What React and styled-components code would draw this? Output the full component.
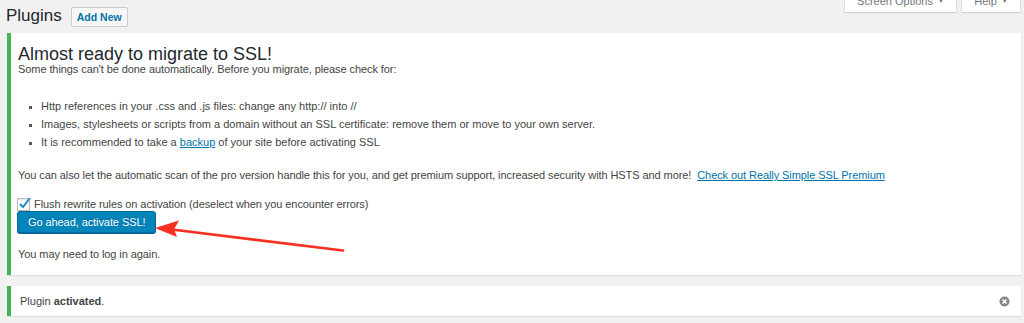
import styled, { createGlobalStyle } from "styled-components";

const GlobalStyle = createGlobalStyle`
  body {
    margin: 0;
    background: #f1f1f1;
    font-family: "Liberation Sans", Arial, sans-serif;
    color: #444;
  }
`;

const Page = styled.div`
  position: relative;
  width: 1024px;
  height: 323px;
  overflow: hidden;
`;

const Header = styled.div`
  display: flex;
  justify-content: space-between;
  align-items: flex-start;
  height: 33px;
`;

const TitleGroup = styled.div`
  display: flex;
  align-items: center;
  height: 33px;
  padding-left: 6px;
`;

const PageTitle = styled.h1`
  margin: 0 9px 2px 0;
  font-size: 17px;
  font-weight: 400;
  color: #23282d;
  line-height: 20px;
`;

const AddNew = styled.a`
  display: inline-flex;
  align-items: center;
  height: 18px;
  padding: 0 5px;
  border: 1px solid #ccc;
  border-radius: 2px;
  background: #f7f7f7;
  color: #0073aa;
  font-size: 10.5px;
  font-weight: 700;
  text-decoration: none;
`;

const Tabs = styled.div`
  display: flex;
  gap: 6px;
  margin-top: -11px;
  padding-right: 4px;
`;

const Tab = styled.div`
  display: flex;
  align-items: center;
  justify-content: center;
  gap: 5px;
  width: ${p => p.$w}px;
  height: 23px;
  background: #fff;
  box-shadow: 0 0 0 1px rgba(0, 0, 0, 0.06), 0 1px 1px rgba(0, 0, 0, 0.08);
  color: #72777c;
  font-size: 11px;
`;

const Caret = styled.span`
  font-size: 6px;
`;

const Notice = styled.div`
  margin: ${p => (p.$gap ? "11px" : "0")} 3px 0 7px;
  background: #fff;
  border-left: 4px solid #46b450;
  box-shadow: 0 1px 1px rgba(0, 0, 0, 0.08);
`;

const MigrateBody = styled.div`
  padding: 12px 12px 13px 7px;
  letter-spacing: -0.08px;
`;

const NoticeTitle = styled.h2`
  margin: 0 0 -2px;
  font-size: 18px;
  font-weight: 400;
  line-height: 19px;
  letter-spacing: 0;
  color: #23282d;
`;

const Text = styled.p`
  margin: ${p => p.$mt || 0}px 0 0;
  font-size: 11px;
  line-height: ${p => p.$lh || 16}px;
`;

const List = styled.ul`
  margin: 21px 0 15px;
  padding-left: 23px;
  list-style: square;
  font-size: 11px;
  line-height: 18px;
  letter-spacing: 0;

  li::marker {
    font-size: 9px;
    color: #555;
  }
`;

const Link = styled.a`
  color: #0073aa;
  text-decoration: underline;
`;

const CheckRow = styled.label`
  display: flex;
  align-items: center;
  gap: 4px;
  height: 14px;
  margin-top: 13px;
  font-size: 11px;
`;

const CheckBox = styled.span`
  position: relative;
  display: inline-block;
  width: 11px;
  height: 11px;
  margin-left: -1px;
  border: 1px solid #b4b9be;
  background: #fff;
  box-shadow: inset 0 1px 2px rgba(0, 0, 0, 0.1);

  svg {
    position: absolute;
    left: 0;
    top: -2px;
  }
`;

const PrimaryButton = styled.button`
  display: block;
  height: 22px;
  padding: 0 10px;
  margin-left: -1px;
  border: 1px solid #006799;
  border-radius: 3px;
  background: #0085ba;
  box-shadow: 0 1px 0 #006799;
  color: #fff;
  font-family: inherit;
  font-size: 11px;
  letter-spacing: inherit;
  text-shadow: 0 -1px 1px #006799;
`;

const ActivatedBody = styled.div`
  display: flex;
  align-items: center;
  justify-content: space-between;
  height: 30px;
  padding: 0 11px 0 9px;
  font-size: 11px;
`;

const Arrow = styled.svg`
  position: absolute;
  left: 150px;
  top: 215px;
  pointer-events: none;
`;

export default function App() {
  return (
    <Page>
      <GlobalStyle />
      <Header>
        <TitleGroup>
          <PageTitle>Plugins</PageTitle>
          <AddNew href="#">Add New</AddNew>
        </TitleGroup>
        <Tabs>
          <Tab $w={111}>
            Screen Options <Caret>▼</Caret>
          </Tab>
          <Tab $w={58}>
            Help <Caret>▼</Caret>
          </Tab>
        </Tabs>
      </Header>

      <Notice>
        <MigrateBody>
          <NoticeTitle>Almost ready to migrate to SSL!</NoticeTitle>
          <Text $lh={14}>
            Some things can't be done automatically. Before you migrate, please check for:
          </Text>
          <List>
            <li>Http references in your .css and .js files: change any http:// into //</li>
            <li>
              Images, stylesheets or scripts from a domain without an SSL certificate: remove
              them or move to your own server.
            </li>
            <li>
              It is recommended to take a <Link href="#">backup</Link> of your site before
              activating SSL
            </li>
          </List>
          <Text $lh={18}>
            You can also let the automatic scan of the pro version handle this for you, and get
            premium support, increased security with HSTS and more!&nbsp;&nbsp;
            <Link href="#">Check out Really Simple SSL Premium</Link>
          </Text>
          <CheckRow>
            <CheckBox>
              <svg width="14" height="12" viewBox="0 0 14 12">
                <path
                  d="M2 7 L5 10 L12 1"
                  fill="none"
                  stroke="#1e8cbe"
                  strokeWidth="2"
                />
              </svg>
            </CheckBox>
            Flush rewrite rules on activation (deselect when you encounter errors)
          </CheckRow>
          <PrimaryButton>Go ahead, activate SSL!</PrimaryButton>
          <Text $mt={13}>You may need to log in again.</Text>
        </MigrateBody>
      </Notice>

      <Notice $gap>
        <ActivatedBody>
          <span>
            Plugin <b>activated</b>.
          </span>
          <svg width="11" height="11" viewBox="0 0 11 11">
            <circle cx="5.5" cy="5.5" r="5" fill="#82878c" />
            <path d="M3.5 3.5 L7.5 7.5 M7.5 3.5 L3.5 7.5" stroke="#fff" strokeWidth="1.6" />
          </svg>
        </ActivatedBody>
      </Notice>

      <Arrow width="200" height="42" viewBox="150 215 200 42">
        <path d="M343 250.5 L172 229.5" stroke="#f8301f" strokeWidth="2.6" strokeLinecap="round" />
        <path d="M155 228 L179 220.5 L174 229.3 L177 237 Z" fill="#f8301f" />
      </Arrow>
    </Page>
  );
}
